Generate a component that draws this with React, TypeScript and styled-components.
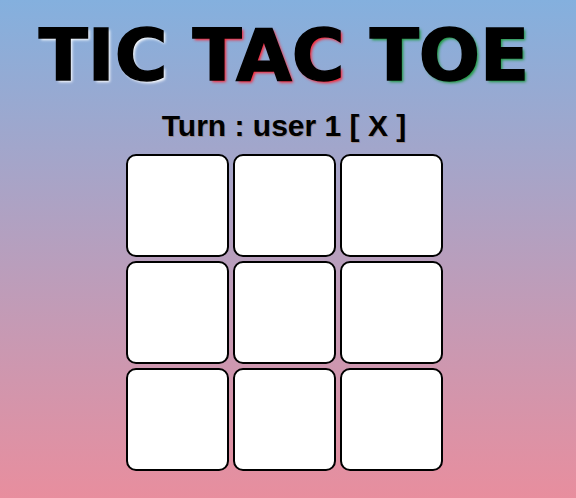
import React from 'react';
import styled, { createGlobalStyle } from 'styled-components';

const GlobalStyle = createGlobalStyle`
    html, body {
        margin: 0;
        padding: 0;
        height: 100%;
    }
    #root {
        min-height: 100%;
    }
`;

const Page = styled.div`
    min-height: 498px;
    box-sizing: border-box;
    background: linear-gradient(to bottom, #84b0de 0%, #e88e9e 100%);
    display: flex;
    flex-direction: column;
    align-items: center;
    padding: 19px 8px 0 0;
`;

const Title = styled.h1`
    margin: 0;
    font-family: 'DejaVu Sans', Verdana, sans-serif;
    font-weight: bold;
    font-size: 72px;
    line-height: 72px;
    color: #000;
    white-space: nowrap;
    -webkit-text-stroke: 1.5px #000;
`;

const Word = styled.span<{ glow: string }>`
    text-shadow: 2px 2px 3px ${p => p.glow};
`;

const Turn = styled.h2`
    margin: 20px 0 13px;
    font-family: 'Liberation Sans', Arial, sans-serif;
    font-weight: bold;
    font-size: 30px;
    line-height: 30px;
    color: #000;
    text-shadow: 1px 1px 0 rgba(150, 90, 20, 0.35);
`;

const Board = styled.div`
    display: grid;
    grid-template-columns: repeat(3, 103px);
    grid-auto-rows: 103px;
    gap: 4px;
`;

const Cell = styled.button`
    box-sizing: border-box;
    width: 103px;
    height: 103px;
    padding: 0;
    background: #fff;
    border: 2px solid #000;
    border-radius: 10px;
    font-family: 'Liberation Sans', Arial, sans-serif;
    font-weight: bold;
    font-size: 60px;
    cursor: pointer;
`;

export default function App() {
    const [cells, setCells] = React.useState<string[]>(Array(9).fill(''));
    const [turn, setTurn] = React.useState<'X' | 'O'>('X');

    const play = (i: number) => {
        if (cells[i]) return;
        const next = [...cells];
        next[i] = turn;
        setCells(next);
        setTurn(turn === 'X' ? 'O' : 'X');
    };

    return (
        <>
            <GlobalStyle />
            <Page>
                <Title>
                    <Word glow="#ffffff">TIC</Word>{' '}
                    <Word glow="#ff2030">TAC</Word>{' '}
                    <Word glow="#1a9a3a">TOE</Word>
                </Title>
                <Turn>Turn : user {turn === 'X' ? 1 : 2} [ {turn} ]</Turn>
                <Board>
                    {cells.map((c, i) => (
                        <Cell key={i} onClick={() => play(i)}>{c}</Cell>
                    ))}
                </Board>
            </Page>
        </>
    );
}
